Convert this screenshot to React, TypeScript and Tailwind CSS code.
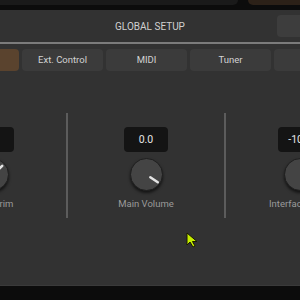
import React from "react";

function Knob({ angle }: { angle?: number }) {
  return (
    <div className="relative w-[33px] h-[33px] rounded-full bg-[#444444] border border-[#1f1f1f] shadow-[0_2px_3px_rgba(0,0,0,0.6)]">
      {angle !== undefined && (
        <svg className="absolute inset-0" width="33" height="33" viewBox="0 0 33 33">
          <line
            x1={16 + 4 * Math.cos((angle * Math.PI) / 180)}
            y1={16 + 4 * Math.sin((angle * Math.PI) / 180)}
            x2={16 + 13 * Math.cos((angle * Math.PI) / 180)}
            y2={16 + 13 * Math.sin((angle * Math.PI) / 180)}
            stroke="#e4e4e4"
            strokeWidth="2.5"
            strokeLinecap="round"
          />
        </svg>
      )}
    </div>
  );
}

function Col({ w, value, label, angle }: { w: string; value: string; label: string; angle?: number }) {
  return (
    <div className={`${w} shrink-0 flex flex-col items-center pt-[14px]`}>
      <div className="w-[44px] h-[25px] rounded-[4px] bg-[#141414] flex items-center justify-center text-[10.5px] text-[#e6e6e6]">
        {value}
      </div>
      <div className="mt-[6px]">
        <Knob angle={angle} />
      </div>
      <div className="mt-[6px] text-[9.5px] text-[#9a9a9a] whitespace-nowrap">{label}</div>
    </div>
  );
}

export default function App() {
  const tab = "w-[81px] h-[22px] shrink-0 rounded-[4px] bg-[#3b3b3b] flex items-center justify-center text-[9.5px] text-[#d2d2d2]";
  return (
    <div
      className="relative w-[300px] h-[300px] overflow-hidden bg-[#0c0c0c] flex flex-col"
      style={{ fontFamily: "Roboto, 'Liberation Sans', sans-serif" }}
    >
      <div className="h-[10px] shrink-0 flex items-start">
        <div className="w-[238px] h-[5px] bg-[#1a1a1a] rounded-br-[5px]" />
        <div className="ml-[10px] flex-1 h-[5px] bg-[#2c2118] rounded-bl-[5px]" />
      </div>
      <div className="h-[275px] shrink-0 bg-[#323232] flex flex-col overflow-hidden">
        <div className="h-[32px] shrink-0 relative flex items-center justify-center">
          <span className="text-[10px] text-[#d0d0d0]">GLOBAL SETUP</span>
          <div className="absolute left-[277px] top-[5px] w-[40px] h-[22px] rounded-[4px] bg-[#3d3d3d]" />
        </div>
        <div className="h-[2px] shrink-0 bg-[#7c7c7c]" />
        <div className="mt-[5px] flex gap-[3px] ml-[-62px]">
          <div className="w-[81px] h-[22px] shrink-0 rounded-[4px] bg-[#5a432e]" />
          <div className={tab}>Ext. Control</div>
          <div className={tab}>MIDI</div>
          <div className={tab}>Tuner</div>
          <div className={tab} />
        </div>
        <div className="mt-[42px] flex ml-[-82px]">
          <Col w="w-[148px]" value="0.0" label="Input Trim" angle={-45} />
          <div className="w-[2px] h-[105px] bg-[#5c5c5c] shrink-0" />
          <Col w="w-[156px]" value="0.0" label="Main Volume" angle={34} />
          <div className="w-[2px] h-[105px] bg-[#5c5c5c] shrink-0" />
          <Col w="w-[148px]" value="-10.0" label="Interface Level" />
        </div>
      </div>
      <div className="h-[1px] bg-[#3a3a3a]" />
      <svg className="absolute left-[186px] top-[232px]" width="14" height="17" viewBox="0 0 14 17">
        <path d="M1 1 L1 13 L4 10 L7 15 L9 14 L6.5 9.5 L11 9.5 Z" fill="#c6ee00" stroke="#1a1a00" strokeWidth="1" strokeLinejoin="round" />
      </svg>
    </div>
  );
}
